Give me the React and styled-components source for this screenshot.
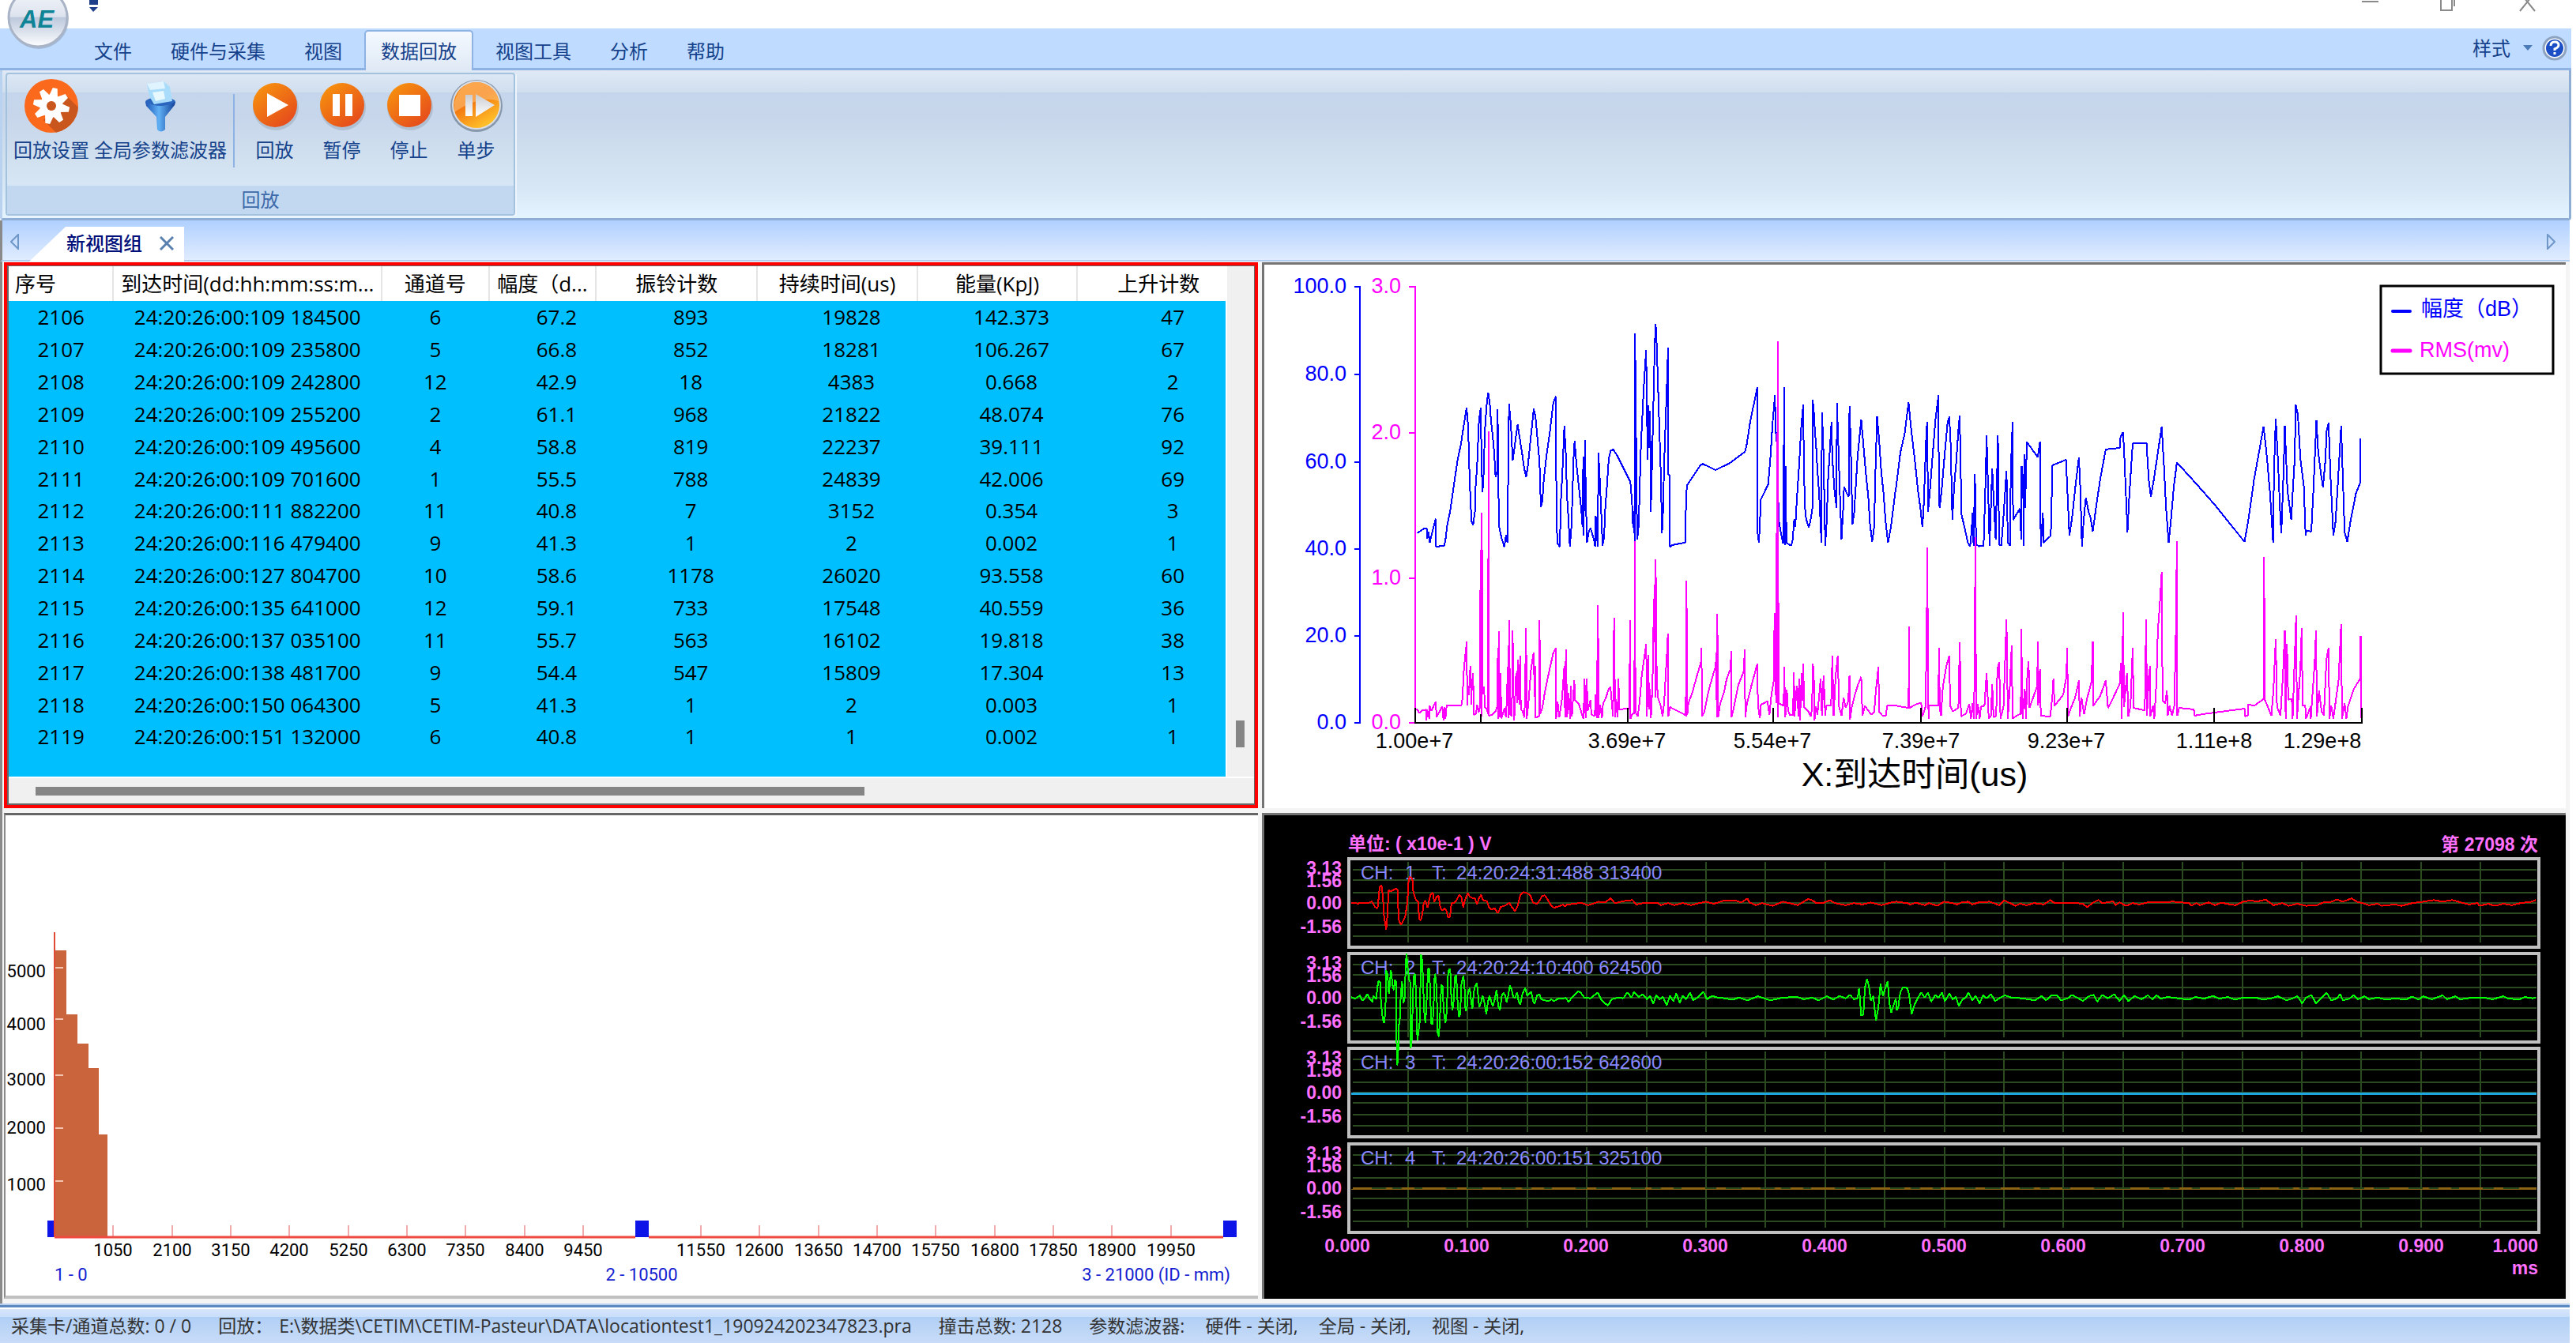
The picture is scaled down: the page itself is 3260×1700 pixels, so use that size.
import React from 'react'
import styled, { createGlobalStyle } from 'styled-components'

const GlobalStyle = createGlobalStyle`
    * {
        box-sizing: border-box;
    }
    body {
        margin: 0;
        background: #ffffff;
        font-family: 'Open Sans', 'Noto Sans CJK SC', sans-serif;
        font-size: 24px;
        line-height: 24px;
    }
    button {
        font: inherit;
        color: inherit;
        border: none;
        background: none;
        padding: 0;
        cursor: pointer;
    }
`

const Window = styled.div`
    position: relative;
    min-height: 100vh;
    display: flex;
    flex-direction: column;
    overflow: hidden;
`

const TitleBar = styled.header`
    height: 36px;
    display: flex;
    justify-content: space-between;
    padding: 0 50px 0 112px;
`

const WindowButtons = styled.div`
    display: flex;
    gap: 78px;
`

const TitleButton = styled.button`
    display: flex;
    height: 16px;
`

const LogoButton = styled.button`
    position: absolute;
    left: 8px;
    top: -18px;
    width: 80px;
    height: 82px;
`

const TabBar = styled.nav`
    height: 53px;
    margin-right: 6px;
    padding: 2px 5px 0 98px;
    display: flex;
    gap: 7px;
    background: #bfdbff;
    border-bottom: 3px solid #8db2e3;
    color: #15428b;
`

const MenuTab = styled.button`
    height: 51px;
    padding: 0 19px;
    white-space: nowrap;
    border: 2px solid ${props => props.$active ? '#8db2e3' : 'transparent'};
    border-width: 2px 2px 0;
    border-radius: 5px 5px 0 0;
    background: ${props => props.$active ? 'linear-gradient(#f4f9ff, #dfe9f5)' : 'none'};
`

const StyleMenu = styled.div`
    margin-left: auto;
    display: flex;
    align-items: center;
    height: 46px;
    gap: 12px;
`

const StyleButton = styled.button`
    display: flex;
    align-items: center;
    gap: 16px;
`

const HelpButton = styled.button`
    display: flex;
`

const Ribbon = styled.section`
    height: 190px;
    margin-right: 6px;
    padding: 3px 4px 4px;
    border: 3px solid #8eaed6;
    border-width: 0 3px 3px 3px;
    border-left-color: #b9d2f0;
    border-radius: 0 0 4px 4px;
    background: linear-gradient(#e0e9f6 0px, #d0deee 28px, #c5d6ec 28px, #c7d6ea 60px, #d0e0ef 110px, #d8e7f5 150px, #e3f4ff 186px);
`

const RibbonGroup = styled.div`
    width: 645px;
    height: 181px;
    display: flex;
    flex-direction: column;
    border: 2px solid #a3c2de;
    border-radius: 4px;
    box-shadow: 2px 1px 0 #eef5fd;
`

const GroupTools = styled.div`
    flex: 1;
    display: flex;
    padding: 6px 0 0 8px;
`

const GroupCaption = styled.div`
    height: 36px;
    line-height: 36px;
    text-align: center;
    color: #3e6aaa;
    background: #c1d8f0;
`

const ToolButton = styled.button`
    min-width: ${props => props.$wide ? '0' : '85px'};
    margin-right: ${props => props.$wide ? '6px' : '0'};
    height: 104px;
    display: flex;
    flex-direction: column;
    align-items: center;
    gap: 10px;
    white-space: nowrap;
    color: #15428b;
`

const ToolSeparator = styled.div`
    width: 2px;
    height: 93px;
    margin: 19px 8px 0 2px;
    background: #8db2e3;
`

const ViewTabs = styled.nav`
    height: 52px;
    margin-right: 8px;
    padding: 8px 18px 0 10px;
    display: flex;
    border-left: 3px solid #8a8a8a;
    border-bottom: 2px solid #b0cdf0;
    background: linear-gradient(#b0d0ff, #e0ecfe);
`

const ArrowButton = styled.button`
    display: flex;
    height: 20px;
    margin-top: 9px;
    margin-left: ${props => props.$end ? 'auto' : '0'};
`

const ViewTab = styled.div`
    height: 44px;
    margin-left: 12px;
    padding: 0 13px 2px 47px;
    display: flex;
    align-items: center;
    gap: 22px;
    background: #ffffff;
    clip-path: polygon(46px 0, 100% 0, 100% 100%, 0 100%);
    font-weight: 500;
    color: #00107a;
`

const Workspace = styled.main`
    flex: 1;
    display: grid;
    grid-template-columns: 1587fr 1650fr;
    align-content: start;
    gap: 6px 5px;
    margin-right: 8px;
    padding: 1px 5px 6px 2px;
    border-left: 3px solid #8a8a8a;
    background: #f4f4f4;
`

const ListPanel = styled.section`
    border: 4px solid #ff0000;
`

const ListFrame = styled.div`
    height: 100%;
    display: grid;
    grid-template-columns: minmax(0, 1fr) 36px;
    border: 1px solid #666666;
    border-width: 1px 1px 2px 2px;
    background: #f0f0f0;
`

const TableArea = styled.div`
    height: 646px;
    overflow: hidden;
    background: #00bfff;
`

const HitTable = styled.table`
    width: calc(100% + 19px);
    height: 616px;
    table-layout: fixed;
    border-collapse: collapse;
    font-size: 26px;
    line-height: 26px;
    color: #000000;
`

const Column = styled.col`
    width: ${props => props.$width}%;
`

const HeadCell = styled.th`
    height: 44px;
    padding: ${props => props.$left ? '0 8px' : '0'};
    text-align: ${props => props.$left ? 'left' : 'center'};
    font-weight: 400;
    white-space: nowrap;
    background: #ffffff;
    border-right: 2px solid #e5e5e5;
`

const Cell = styled.td`
    height: 40px;
    padding: 0 0 0 ${props => props.$shift ? '36px' : '0'};
    text-align: center;
    white-space: nowrap;
`

const VScroll = styled.div`
    display: flex;
    align-items: flex-end;
    padding: 0 0 37px 11px;
    border-left: 2px solid #ffffff;
`

const HScroll = styled.div`
    grid-column: 1 / -1;
    height: 34px;
    padding: 11px 0 0 34px;
    border-top: 2px solid #ffffff;
`

const Thumb = styled.div`
    width: ${props => props.$vertical ? '11px' : '68%'};
    height: ${props => props.$vertical ? '34px' : '11px'};
    background: #858585;
`

const ChartPanel = styled.section`
    border: 3px solid #747474;
    border-width: 3px 0 0 3px;
    background: ${props => props.$dark ? '#000000' : '#ffffff'};
`

const HistogramPanel = styled.section`
    border-top: 3px solid #666666;
    border-left: 2px solid #8a8a8a;
    border-bottom: 4px solid #c0c0c0;
    background: #ffffff;
`

const Chart = styled.svg`
    display: block;
    width: 100%;
    height: auto;
`

const AxisText = styled.text`
    font-family: 'Liberation Sans', 'Noto Sans CJK SC', sans-serif;
    font-size: ${props => props.$size || 27}px;
    font-weight: ${props => props.$bold ? 700 : 400};
    dominant-baseline: central;
`

const NarrowText = styled.text`
    font-family: Roboto, sans-serif;
    font-size: 22px;
    dominant-baseline: central;
`

const StatusBar = styled.footer`
    height: 50px;
    margin-right: 8px;
    display: flex;
    align-items: center;
    gap: 34px;
    padding: 4px 14px 0;
    border-top: 2px solid #b8cfee;
    box-shadow: inset 0 3px 0 #5a88c0, inset 0 5px 0 #ffffff;
    background: linear-gradient(#dce9fb 0px, #c9defa 15px, #b0cff5 15px, #c9dcf8 48px);
    color: #333333;
    font-size: 23px;
    white-space: nowrap;
`

const StatusGroup = styled.div`
    display: flex;
    gap: ${props => props.$gap}px;
`

const tabs = ['文件', '硬件与采集', '视图', '数据回放', '视图工具', '分析', '帮助']

const columns = [
    { title: '序号', width: 8.5 },
    { title: '到达时间(dd:hh:mm:ss:m...', width: 21.8 },
    { title: '通道号', width: 8.7 },
    { title: '幅度（d...', width: 8.7 },
    { title: '振铃计数', width: 13.1 },
    { title: '持续时间(us)', width: 13 },
    { title: '能量(KpJ)', width: 13 },
    { title: '上升计数', width: 13.2 },
]

const hits = [
    ['2106', '24:20:26:00:109 184500', '6', '67.2', '893', '19828', '142.373', '47'],
    ['2107', '24:20:26:00:109 235800', '5', '66.8', '852', '18281', '106.267', '67'],
    ['2108', '24:20:26:00:109 242800', '12', '42.9', '18', '4383', '0.668', '2'],
    ['2109', '24:20:26:00:109 255200', '2', '61.1', '968', '21822', '48.074', '76'],
    ['2110', '24:20:26:00:109 495600', '4', '58.8', '819', '22237', '39.111', '92'],
    ['2111', '24:20:26:00:109 701600', '1', '55.5', '788', '24839', '42.006', '69'],
    ['2112', '24:20:26:00:111 882200', '11', '40.8', '7', '3152', '0.354', '3'],
    ['2113', '24:20:26:00:116 479400', '9', '41.3', '1', '2', '0.002', '1'],
    ['2114', '24:20:26:00:127 804700', '10', '58.6', '1178', '26020', '93.558', '60'],
    ['2115', '24:20:26:00:135 641000', '12', '59.1', '733', '17548', '40.559', '36'],
    ['2116', '24:20:26:00:137 035100', '11', '55.7', '563', '16102', '19.818', '38'],
    ['2117', '24:20:26:00:138 481700', '9', '54.4', '547', '15809', '17.304', '13'],
    ['2118', '24:20:26:00:150 064300', '5', '41.3', '1', '2', '0.003', '1'],
    ['2119', '24:20:26:00:151 132000', '6', '40.8', '1', '1', '0.002', '1'],
]

// every recorded block has its own origin and sample scale
const toPoints = (blocks) => blocks.map(({ x, y, kx, ky, data }) => (
    data.split(' ').map(pair => {
        const [px, py] = pair.split(',').map(Number)
        return `${(x + px / kx).toFixed(1)},${(y + py / ky).toFixed(1)}`
    }).join(' ')
)).join(' ')

const blockA = { x: 1780, y: 400, kx: 3, ky: 3 }
const blockB = { x: 1600, y: 330, kx: 1.889, ky: 2.24 }
const blockC = { x: 2400, y: 330, kx: 1.823, ky: 2.24 }
const waveA = { x: 1700, y: 1080, kx: 3, ky: 3 }
const waveB = { x: 1600, y: 1020, kx: 1.889, ky: 2.306 }
const waveC = { x: 2400, y: 1020, kx: 1.823, ky: 2.306 }

const amplitude = toPoints([
    { ...blockA, data: '40,825 66,808 77,808 79,845 84,820 88,862 97,825 111,770 112,877 124,877 127,872 143,872 148,850 155,790 165,745 180,640 195,540 207,485 215,430 228,348 234,420 238,565 243,705 247,780 253,793 260,740 262,655 268,570 275,395 282,348 284,510 288,670 292,630 294,545 299,405 305,330 310,290 316,330 320,390 327,455 333,520 338,612 344,590 346,355 350,745 352,800 360,840 371,877 378,830 383,860 386,595 389,332 393,375 398,445 403,550 410,500 416,450 422,412 430,465 440,530 446,575 454,612 460,575 466,520 474,440 483,352 490,385 500,500 505,555 510,727 516,700 520,635 530,540 543,450 557,330 567,305 568,585 572,862 582,877 586,705 592,590 599,418 605,530 609,675 614,760 620,875 626,800 630,680 634,545 638,473 645,560 655,655 663,730 668,800 671,535 672,835 678,470 680,660 685,862 692,820 698,805 712,850 716,877 718,758 722,790 724,850 727,877 728,520 732,580 737,695 742,810 744,872 750,840 755,720 760,660 768,540 775,512 785,507 800,530 825,580 840,610 850,630 853,665 858,740 860,805 864,740 866,855 867,66 870,265 873,650 876,848 882,790 884,690 890,490 900,285 906,185 910,130 912,340 916,545 918,340 922,500 925,360 927,745 930,655 934,480 938,300 942,120 946,30 950,112 955,270 960,430 965,590 970,825 974,738 978,565 984,390 990,215 993,120 994,600 999,605 1000,877 1008,870 1058,860 1060,755 1064,645 1090,605 1117,565 1125,562 1150,573 1172,585 1225,560 1285,515 1292,485 1305,400 1332,270 1332,815 1338,862 1342,780 1345,697 1373,640 1382,530 1390,405 1399,300 1401,445 1405,445 1408,600 1414,780 1420,815 1430,865 1434,270 1436,870 1440,570 1442,862 1460,872 1466,850 1472,770 1476,800 1482,695 1490,575 1498,430 1506,337 1508,520 1512,720 1517,770 1527,803 1533,780 1541,730 1542,317 1546,355 1550,430 1556,510 1560,585' },
    { ...blockB, data: '1326,655 1332,800 1333,430 1336,510 1341,808 1345,730 1347,635 1356,457 1358,560 1363,650 1368,700 1369,403 1372,510 1377,700 1380,790 1384,700 1386,642 1392,658 1397,670 1399,413 1402,520 1406,748 1410,718 1413,660 1418,560 1427,450 1432,520 1438,600 1444,670 1448,745 1453,798 1458,755 1461,600 1465,442 1470,510 1475,600 1480,655 1485,735 1491,800 1498,755 1508,660' },
    { ...blockC, data: '0,635 9,545 19,490 28,402 34,480 42,560 50,655 55,700 60,755 63,690 69,490 71,457 73,712 78,640 82,575 90,450 97,382 98,690 100,700 105,640 112,540 118,460 122,442 125,520 129,735 133,640 138,570 143,480 146,440 150,720 155,745 165,800 170,810 173,770 176,715 178,808 181,605 184,805 191,810 201,808 206,610 208,495 211,620 215,808 221,590 224,670 229,790 234,495 237,805 242,808 247,725 254,595 257,800 262,808 264,590 268,457 269,735 285,703 288,790 289,583 292,620 294,808 295,548 297,700 301,514 326,557 331,514 333,810 338,715 339,800 356,780 360,580 388,566 391,563 394,640 399,780 405,730 413,640 421,557 424,640 428,810 432,735 437,672 443,710 448,730 453,767 460,705 470,620 483,535 515,531 517,500 523,486 526,560 533,770 537,670 545,518 577,518 582,620 587,670 594,620 603,545 612,470 617,580 622,700 628,800 633,740 640,640 647,572 690,630 735,693 803,797 812,735 825,620 837,540 847,470 855,560 862,660 869,800 871,600 875,447 880,560 885,710 888,773 893,600 896,468 902,650 911,735 915,640 919,560 921,408 926,436 932,560 940,640 944,780 946,765 957,768 962,650 969,453 973,540 980,610 984,642 990,560 992,485 997,460 1001,600 1008,780 1013,740 1018,640 1026,468 1030,620 1034,770 1040,797 1048,735 1060,660 1070,630 1071,503' },
])

const rms = toPoints([
    { ...blockA, data: '34,1495 42,1495 48,1508 60,1498 75,1495 76,1535 78,1495 87,1530 88,1480 95,1500 103,1480 112,1465 113,1523 124,1505 136,1483 140,1535 145,1484 148,1530 152,1480 208,1480 212,1455 218,1335 225,1272 229,1237 230,1480 233,1405 238,1440 240,1355 244,1330 245,1475 249,1390 253,1357 255,1515 264,1510 268,1475 274,1505 279,1483 281,888 284,1520 286,747 289,1437 294,1408 298,1485 305,1493 310,1510 311,438 313,1518 325,1515 338,1500 344,1485 347,1260 348,1530 351,1197 354,1525 357,1356 360,1528 372,1490 378,1525 385,1332 387,1528 389,1155 394,1512 400,1520 403,1195 406,1430 409,1535 416,1356 420,1470 422,1305 428,1475 431,1290 434,1495 440,1500 448,1525 454,1185 456,1530 463,1470 472,1350 478,1305 483,1278 486,1445 488,1330 489,1525 504,1520 505,1155 508,1510 515,1490 525,1430 535,1380 548,1320 557,1280 567,1260 568,1530 574,1465 580,1525 590,1455 597,1360 599,1330 602,1525 605,1266 610,1525 615,1430 622,1530 623,1405 628,1520 637,1383 640,1460 655,1475 665,1510 672,1530 676,1378 680,1528 684,1378 688,1500 698,1458 702,1513 715,1520 717,1437 722,1528 727,1098 729,1528 735,1475 742,1528 746,1473 757,1450 768,1415 774,1408 778,1450 784,1520 788,1146 792,1523 796,1455 801,1525 805,1377 807,1495 838,1490 846,1490 849,1155 850,1530 858,1510 865,1510 867,855 869,1505 878,1520 885,1465 893,1365 905,1280 910,1245 913,1520 917,1287 922,1495 925,1415 928,1528 934,1400 937,1205 942,1020 945,1450 946,925 950,1390 955,1450 965,1480 972,1520 978,1470 984,1362 990,1260 992,1206 994,1520 1000,1485 1058,1515 1060,1445 1062,1520 1063,1005 1066,1515 1070,1470 1085,1430 1100,1375 1118,1313 1120,1260 1122,1520 1130,1505 1145,1430 1160,1375 1174,1330 1176,1278 1178,1525 1180,1132 1183,1525 1190,1475 1205,1430 1215,1380 1230,1340 1233,1272 1234,1525 1242,1490 1260,1400 1280,1350 1284,1266 1286,1523 1292,1475 1310,1400 1332,1320 1334,1480 1342,1528 1345,1477 1370,1463 1378,1515 1385,1440 1395,1380 1397,1128 1403,1470 1407,445 1409,1523 1410,97 1412,1470 1432,1480 1434,1332 1438,1523 1441,1480 1444,1420 1448,1495 1455,1515 1467,1515 1471,1354 1473,1520 1482,1405 1488,1520 1490,1377 1494,1535 1500,1357 1504,1460 1506,1320 1510,1485 1525,1500 1535,1520 1540,1485 1542,1320 1546,1340 1549,1535 1555,1483 1560,1515' },
    { ...blockB, data: '1330,1185 1333,1290 1337,1175 1341,1290 1343,1262 1355,1262 1358,1120 1361,1290 1366,1175 1371,1120 1374,1265 1380,1290 1385,1240 1390,1268 1396,1250 1399,1175 1400,1302 1405,1262 1412,1230 1420,1200 1427,1180 1430,1290 1436,1262 1443,1275 1452,1287 1458,1280 1462,1220 1468,1152 1470,1280 1478,1290 1486,1290 1489,1262 1508,1262' },
    { ...blockC, data: '0,1262 28,1268 29,1037 30,1268 45,1258 57,1253 60,1292 67,1265 70,1042 71,813 74,1298 75,1262 97,1262 98,1098 100,1270 103,1290 107,1210 115,1150 122,1120 124,1262 130,1278 143,1268 146,1082 149,1292 160,1285 168,1258 172,1298 176,1255 179,1298 181,1042 182,785 184,1298 188,1258 192,1298 195,1265 203,1262 208,1170 213,1298 218,1290 221,1200 224,1295 230,1290 233,1158 237,1138 240,1298 247,1265 254,1016 257,1298 262,1200 266,1090 268,1298 280,1288 287,1285 288,1045 291,1298 296,1215 299,1298 302,1170 305,1136 307,1268 325,1205 326,1080 327,1260 331,1158 333,1290 355,1293 360,1230 362,1185 365,1262 385,1230 392,1180 394,1098 396,1292 402,1270 412,1240 421,1190 423,1292 427,1240 433,1285 440,1240 450,1195 453,1080 454,1262 470,1235 483,1190 488,1268 496,1250 515,1200 518,1140 520,1298 523,996 525,1265 532,1170 535,1292 540,1262 545,1098 547,1268 573,1275 576,1016 578,1290 582,1180 585,1150 586,1292 592,1262 595,1298 600,1190 603,1050 607,985 612,883 614,1248 620,1255 624,1218 626,1290 630,1262 636,1290 641,1262 645,1030 647,796 648,1290 652,1268 686,1272 688,1290 710,1285 803,1270 804,1292 811,1290 811,1258 825,1262 847,1243 848,840 850,1245 865,1290 870,1215 875,1072 878,1265 886,1290 892,1170 896,1048 898,1298 901,1087 904,1245 912,1242 914,1298 920,1080 922,1006 924,1298 932,1158 935,1042 937,1262 943,1260 945,1298 955,1265 956,1298 965,1140 968,1048 970,1292 975,1220 981,1278 986,1290 992,1130 997,1098 999,1298 1003,1262 1008,1298 1020,1190 1026,1030 1028,1298 1034,1255 1038,1298 1042,1262 1055,1215 1070,1185 1071,1064 1072,1298' },
])

const waveOne = toPoints([
    { ...waveA, data: '30,188 45,188 55,192 65,188 75,190 95,190 108,183 120,203 130,210 134,170 138,128 145,122 150,160 155,245 163,290 167,240 172,140 180,145 190,140 200,135 206,140 210,250 218,272 225,262 235,240 243,190 248,100 252,90 262,95 266,150 275,175 284,185 288,250 294,255 300,230 305,190 312,180 320,207 330,160 340,150 345,185 355,165 362,162 368,205 375,218 385,210 392,220 398,245 405,240 411,190 420,188 430,178 440,158 448,165 455,205 463,175 473,150 480,165 490,170 500,172 508,195 515,170 523,158 530,178 545,182 553,205 562,213 575,210 587,228 597,205 610,200 622,195 630,188 640,205 652,220 662,200 672,158 685,148 700,153 710,160 720,188 735,192 745,180 755,162 765,160 775,175 790,200 800,207 815,203 835,195 840,203 850,195 880,192 900,188' },
    { ...waveB, data: '775,290 800,280 815,282 828,270 838,284 860,278 880,275 890,288 910,283 940,283 948,290 965,284 980,290 1000,284 1020,290 1040,284 1055,280 1075,286 1100,276 1125,276 1140,282 1155,271 1160,282 1175,290 1190,284 1215,292 1240,280 1255,284 1275,290 1300,272 1310,276 1320,284 1335,284 1352,276 1365,284 1390,290 1410,284 1430,288 1450,282 1475,290 1500,282' },
    { ...waveC, data: '0,280 25,284 32,288 45,283 65,290 75,284 95,292 103,285 110,280 130,284 140,288 150,282 165,280 175,288 190,282 215,280 237,290 248,276 262,284 275,292 285,286 300,290 318,284 340,288 355,275 365,284 415,284 430,286 440,296 452,284 466,275 475,284 500,279 505,290 515,282 530,292 545,284 560,288 580,282 640,280 675,284 680,292 692,284 700,290 720,282 735,290 750,283 770,288 782,290 800,280 818,276 830,280 852,274 870,290 890,284 905,292 925,286 945,292 970,290 985,282 1005,280 1015,273 1030,280 1050,270 1062,280 1075,284 1090,290 1110,286 1120,292 1150,288 1165,292 1190,284 1215,280 1240,275 1260,280 1282,275 1300,281 1320,288 1340,284 1345,292 1365,286 1380,292 1400,286 1420,290 1440,284 1465,280 1475,275' },
])

const waveTwo = toPoints([
    { ...waveA, data: '30,547 45,553 63,540 72,560 82,550 91,535 100,552 110,565 115,542 125,555 129,510 134,485 140,490 143,570 150,630 155,645 160,600 163,445 168,460 173,535 178,480 181,443 187,500 192,520 196,480 201,490 203,805 208,790 210,660 215,625 218,540 223,485 228,570 233,550 237,420 240,382 244,430 250,480 254,490 256,740 261,700 263,580 267,470 273,458 278,600 281,710 285,680 290,640 295,385 300,410 304,520 308,620 312,645 318,530 322,437 327,440 330,540 334,645 339,650 343,580 347,458 352,480 356,580 358,680 363,697 367,620 372,500 377,505 381,600 388,645 393,600 397,470 401,440 406,440 410,550 414,598 419,560 424,470 429,462 434,570 439,622 444,610 448,500 456,466 460,500 464,600 469,590 473,530 480,512 485,560 490,592 495,530 500,505 507,493 511,530 516,585 522,570 529,540 536,570 543,612 548,570 555,540 562,565 568,580 574,560 582,518 588,580 595,597 602,540 608,530 614,540 620,565 626,540 632,503 638,515 645,545 652,550 660,528 665,560 672,575 680,535 690,512 698,540 705,535 713,525 720,560 726,573 735,540 745,537 752,555 770,560 780,562 790,555 800,562 815,553 845,550 855,565 865,552 880,535 892,525 900,528' },
    { ...waveB, data: '765,560 780,562 797,545 805,565 812,575 822,583 830,565 845,560 858,562 868,545 878,560 884,543 895,558 905,550 915,565 922,555 930,578 937,553 945,565 953,558 962,582 970,555 978,570 985,548 993,575 1000,555 1008,565 1018,545 1025,568 1035,560 1050,543 1058,565 1070,555 1085,560 1100,562 1120,566 1135,560 1155,568 1180,556 1210,568 1240,560 1275,558 1290,565 1310,560 1325,568 1345,556 1360,566 1375,555 1390,562 1400,552 1410,565 1418,562 1422,532 1427,612 1432,610 1436,530 1441,505 1445,525 1450,568 1456,555 1462,628 1468,590 1473,520 1479,555 1485,530 1490,513 1495,580 1499,603 1505,580 1510,563' },
    { ...waveC, data: '0,597 4,590 9,545 15,530 25,532 29,550 35,608 42,580 50,560 57,545 65,560 73,545 80,572 90,552 97,560 105,545 112,570 122,548 130,565 137,558 144,585 152,565 160,560 166,545 175,568 183,555 192,577 200,552 208,562 218,550 228,570 240,560 250,553 265,560 290,562 320,568 335,555 345,568 358,553 370,553 380,568 395,562 405,552 420,562 430,570 445,555 455,552 463,572 475,552 488,562 502,550 515,570 525,552 535,570 550,555 565,565 580,553 590,565 600,553 610,563 625,558 650,562 675,566 690,558 710,563 730,555 745,563 765,558 780,566 800,560 830,560 845,566 865,562 880,556 900,568 915,562 925,555 936,577 945,560 957,552 968,577 980,562 992,545 1003,568 1015,563 1024,550 1030,568 1045,563 1055,552 1065,565 1080,556 1090,565 1110,560 1130,566 1150,562 1175,566 1190,557 1205,566 1215,556 1235,565 1260,553 1270,565 1290,556 1300,565 1330,560 1355,560 1375,565 1400,556 1410,562 1435,566 1450,558 1468,562 1475,560' },
])

const AppLogo = () => (
    <svg width="80" height="82" viewBox="0 0 80 82">
        <defs>
            <linearGradient id="orb" x1="0" y1="0" x2="0" y2="1">
                <stop offset="0" stopColor="#f4f6fa" />
                <stop offset="0.49" stopColor="#dde3ee" />
                <stop offset="0.5" stopColor="#bcc8dc" />
                <stop offset="1" stopColor="#fdfdfe" />
            </linearGradient>
        </defs>
        <circle cx="41" cy="42" r="38" fill="#8fa3c0" opacity="0.6" />
        <circle cx="40" cy="40" r="37" fill="url(#orb)" stroke="#a9b4c7" strokeWidth="3" />
        <text x="17" y="53" fontFamily="Liberation Sans, sans-serif" fontSize="31" fontWeight="700" fontStyle="italic" fill="#0f8496">AE</text>
        <path d="M50 37 H62 M48 46 H60" stroke="#d5dde9" strokeWidth="1" />
    </svg>
)

const SettingsIcon = () => (
    <svg width="68" height="68" viewBox="0 0 68 68">
        <defs>
            <clipPath id="disc"><circle cx="34" cy="34" r="34" /></clipPath>
        </defs>
        <circle cx="34" cy="34" r="34" fill="#fb6a1c" />
        <path d="M52 20 L80 48 L60 80 L44 72 L24 52 Z" fill="#c9561c" clipPath="url(#disc)" />
        {[0, 45, 90, 135, 180, 225, 270, 315].map(angle => (
            <path key={angle} d="M28 24 L31 11 L37 11 L40 24 Z" fill="#ffffff" transform={`rotate(${angle + 12} 34 34)`} />
        ))}
        <circle cx="34" cy="34" r="10" fill="none" stroke="#ffffff" strokeWidth="9" />
        <circle cx="34" cy="34" r="6" fill="#c9561c" />
    </svg>
)

const FilterIcon = () => (
    <svg width="68" height="68" viewBox="0 0 68 68">
        <defs>
            <linearGradient id="funnel" x1="0" y1="0" x2="1" y2="0">
                <stop offset="0" stopColor="#1c55b4" />
                <stop offset="0.45" stopColor="#5fb0f5" />
                <stop offset="1" stopColor="#123f97" />
            </linearGradient>
        </defs>
        <ellipse cx="34" cy="29" rx="19" ry="6" fill="#2a66bd" />
        <path d="M15 29 Q34 39 53 29 L52 33 L40 48 L40 64 Q34 69 30 64 L29 48 L16 34 Z" fill="url(#funnel)" />
        <path d="M17 6 L38 3 L46 10 L49 28 L26 32 L20 22 Z" fill="#a9dcfb" />
        <path d="M17 6 L38 3 L40 12 L21 14 Z" fill="#dff4ff" />
        <path d="M24 17 L38 15 L40 25 L28 28 Z" fill="#e8f8ff" />
    </svg>
)

const MediaIcon = ({ kind }) => (
    <svg width="68" height="68" viewBox="0 0 68 68">
        <defs>
            <linearGradient id={`media-${kind}`} x1="0" y1="0" x2="0.8" y2="1">
                <stop offset="0" stopColor="#f99a0c" />
                <stop offset="1" stopColor="#e5481d" />
            </linearGradient>
        </defs>
        <circle cx="35" cy="36" r="29" fill="#8d9db0" opacity="0.4" />
        <circle cx="34" cy="33" r="28" fill={`url(#media-${kind})`} />
        {kind === 'play' && <path d="M24 18 V48 L51 33 Z" fill="#ffffff" />}
        {kind === 'pause' && <path d="M22 19 H31 V47 H22 Z M38 19 H47 V47 H38 Z" fill="#ffffff" />}
        {kind === 'stop' && <path d="M21 20 H48 V47 H21 Z" fill="#ffffff" />}
    </svg>
)

const StepIcon = () => (
    <svg width="68" height="68" viewBox="0 0 68 68">
        <defs>
            <linearGradient id="step" x1="0" y1="0" x2="0.6" y2="1">
                <stop offset="0" stopColor="#f98b12" />
                <stop offset="0.5" stopColor="#f47a10" />
                <stop offset="1" stopColor="#ffc02a" />
            </linearGradient>
            <linearGradient id="stepBar" x1="0" y1="0" x2="0" y2="1">
                <stop offset="0" stopColor="#c9cbd0" />
                <stop offset="1" stopColor="#ffffff" />
            </linearGradient>
        </defs>
        <circle cx="34" cy="34" r="33" fill="#8797ac" />
        <circle cx="34" cy="33" r="31" fill="#d9dde4" />
        <circle cx="34" cy="33" r="29" fill="url(#step)" />
        <path d="M6 30 Q12 5 34 4 Q58 6 62 28 Q40 20 6 42 Z" fill="#ffc98a" opacity="0.5" />
        <path d="M20 20 H29 V47 H20 Z M33 19 L57 33 L33 48 Z" fill="url(#stepBar)" />
    </svg>
)

const HelpIcon = () => (
    <svg width="32" height="32" viewBox="0 0 32 32">
        <circle cx="16" cy="16" r="14" fill="#ffffff" stroke="#8ea3bf" strokeWidth="3" />
        <circle cx="16" cy="16" r="11" fill="#1c4fc6" />
        <path d="M11 13 Q11 8 16 8 Q21 8 21 12 Q21 15 16 17 V19 M16 21 V24" fill="none" stroke="#ffffff" strokeWidth="3" />
    </svg>
)

const tools = [
    { label: '回放', icon: <MediaIcon kind="play" /> },
    { label: '暂停', icon: <MediaIcon kind="pause" /> },
    { label: '停止', icon: <MediaIcon kind="stop" /> },
    { label: '单步', icon: <StepIcon /> },
]

const HitList = () => (
    <ListPanel>
        <ListFrame>
            <TableArea>
                <HitTable>
                    <colgroup>
                        {columns.map(column => <Column key={column.title} $width={column.width} />)}
                    </colgroup>
                    <thead>
                        <tr>
                            {columns.map((column, i) => (
                                <HeadCell key={column.title} $left={i === 0}>{column.title}</HeadCell>
                            ))}
                        </tr>
                    </thead>
                    <tbody>
                        {hits.map(hit => (
                            <tr key={hit[0]}>
                                {hit.map((value, i) => <Cell key={i} $shift={i > 2}>{value}</Cell>)}
                            </tr>
                        ))}
                    </tbody>
                </HitTable>
            </TableArea>
            <VScroll>
                <Thumb $vertical />
            </VScroll>
            <HScroll>
                <Thumb />
            </HScroll>
        </ListFrame>
    </ListPanel>
)

const dbTicks = [['100.0', 363], ['80.0', 474], ['60.0', 585], ['40.0', 695], ['20.0', 805], ['0.0', 915]]
const mvTicks = [['3.0', 363], ['2.0', 548], ['1.0', 732], ['0.0', 915]]
const timeLabels = [['1.00e+7', 1790], ['3.69e+7', 2059], ['5.54e+7', 2243], ['7.39e+7', 2431], ['9.23e+7', 2615], ['1.11e+8', 2802], ['1.29e+8', 2939]]

const TimeChart = () => (
    <ChartPanel>
        <Chart viewBox="1600 335 1647 687">
            <g stroke="#0000ff" strokeWidth="2" shapeRendering="crispEdges">
                <path d="M1721 362 V916" />
                {dbTicks.map(([label, y]) => <path key={label} d={`M1714 ${y} H1721`} />)}
            </g>
            {dbTicks.map(([label, y]) => (
                <AxisText key={label} x="1704" y={y - 1} textAnchor="end" fill="#0000ff">{label}</AxisText>
            ))}
            {mvTicks.map(([label, y]) => (
                <AxisText key={label} x="1773" y={y - 1} textAnchor="end" fill="#ff00ff">{label}</AxisText>
            ))}
            <polyline points={amplitude} fill="none" stroke="#0000ff" strokeWidth="2" strokeLinejoin="bevel" shapeRendering="crispEdges" />
            <polyline points={rms} fill="none" stroke="#ff00ff" strokeWidth="2" strokeLinejoin="bevel" shapeRendering="crispEdges" />
            <g stroke="#ff00ff" strokeWidth="2" shapeRendering="crispEdges">
                <path d="M1791 362 V916" />
                {mvTicks.map(([label, y]) => <path key={label} d={`M1783 ${y} H1791`} />)}
            </g>
            <path d="M1790 915 H2990 M1791 896 V915 M1874 904 V915 M2060 896 V915 M2244 896 V915 M2431 896 V915 M2616 896 V915 M2802 896 V915 M2989 896 V915" stroke="#000000" strokeWidth="2" shapeRendering="crispEdges" />
            {timeLabels.map(([label, x]) => (
                <AxisText key={label} x={x} y="938" textAnchor="middle">{label}</AxisText>
            ))}
            <AxisText x="2423" y="980" textAnchor="middle" $size={43}>X:到达时间(us)</AxisText>
            <rect x="3013" y="362" width="218" height="111" fill="#ffffff" stroke="#000000" strokeWidth="3" />
            <path d="M3028 394 H3050" stroke="#0000ff" strokeWidth="4" strokeLinecap="round" />
            <AxisText x="3064" y="391" fill="#0000ff">幅度（dB）</AxisText>
            <path d="M3028 444 H3050" stroke="#ff00ff" strokeWidth="5" strokeLinecap="round" />
            <AxisText x="3062" y="443" fill="#ff00ff">RMS(mv)</AxisText>
        </Chart>
    </ChartPanel>
)

const bars = [[69, 1203], [83, 1284], [97, 1321], [110, 1352], [124, 1436]]
const countTicks = [['5000', 1225, 1229], ['4000', 1290, 1296], ['3000', 1361, 1366], ['2000', 1428, 1427], ['1000', 1495, 1499]]
const distances = [1050, 2100, 3150, 4200, 5250, 6300, 7350, 8400, 9450, 11550, 12600, 13650, 14700, 15750, 16800, 17850, 18900, 19950]
const distanceX = (mm) => Math.round(69 + mm * 1487 / 21000)

const Histogram = () => (
    <HistogramPanel>
        <Chart viewBox="7 1032 1585 608">
            <rect x="60" y="1545" width="17" height="21" fill="#0c14e8" />
            <rect x="804" y="1545" width="17" height="21" fill="#0c14e8" />
            <rect x="1548" y="1545" width="17" height="21" fill="#0c14e8" />
            {bars.map(([x, y]) => <rect key={x} x={x} y={y} width={x === 124 ? 12 : 15} height={1565 - y} fill="#ca643c" />)}
            <path d="M69 1180 V1566" stroke="#e04a34" strokeWidth="2" />
            <path d="M69 1566 H804 M821 1566 H1548" stroke="#ee4a40" strokeWidth="3" />
            {countTicks.map(([label, tick, y]) => (
                <g key={label}>
                    <path d={`M70 ${tick} H80`} stroke="#f5c4ae" strokeWidth="2" />
                    <NarrowText x="58" y={y} textAnchor="end">{label}</NarrowText>
                </g>
            ))}
            {distances.map(mm => (
                <g key={mm}>
                    <path d={`M${distanceX(mm)} 1551 V1565`} stroke="#e2565a" />
                    <NarrowText x={distanceX(mm)} y="1582" textAnchor="middle">{mm}</NarrowText>
                </g>
            ))}
            <NarrowText x="69" y="1613" fill="#1420d0">1 - 0</NarrowText>
            <NarrowText x="812" y="1613" textAnchor="middle" fill="#1420d0">2 - 10500</NarrowText>
            <NarrowText x="1557" y="1613" textAnchor="end" fill="#1420d0">3 - 21000 (ID - mm)</NarrowText>
        </Chart>
    </HistogramPanel>
)

const channels = [
    { id: 1, time: '24:20:24:31:488 313400', top: 1085 },
    { id: 2, time: '24:20:24:10:400 624500', top: 1205 },
    { id: 3, time: '24:20:26:00:152 642600', top: 1325 },
    { id: 4, time: '24:20:26:00:151 325100', top: 1446 },
]
const gridX = Array.from({ length: 19 }, (_, i) => Math.round(1782 + i * 754 / 10))
const gridY = [16, 29, 45, 58, 71, 86, 100]
const voltLabels = [['3.13', 14], ['1.56', 30], ['0.00', 58], ['-1.56', 88]]
const msLabels = ['0.000', '0.100', '0.200', '0.300', '0.400', '0.500', '0.600', '0.700', '0.800', '0.900']

const WaveChart = () => (
    <ChartPanel $dark>
        <Chart viewBox="1600 1032 1647 612">
            <AxisText x="1706" y="1068" fill="#ff70ff" $size={23} $bold>单位: ( x10e-1 ) V</AxisText>
            <AxisText x="3212" y="1069" textAnchor="end" fill="#ff70ff" $size={23} $bold>第 27098 次</AxisText>
            {channels.map(({ id, time, top }) => (
                <g key={id}>
                    <g stroke="#2b4a20" strokeWidth="2" shapeRendering="crispEdges">
                        {gridX.map(x => <path key={x} d={`M${x} ${top + 6} V${top + 108}`} />)}
                        {gridY.map(y => <path key={y} d={`M1712 ${top + y} H3210`} />)}
                    </g>
                    <rect x="1707" y={top + 2} width="1506" height="112" fill="none" stroke="#c0c0c0" strokeWidth="4" />
                    {voltLabels.map(([label, y]) => (
                        <AxisText key={label} x="1698" y={top + y} textAnchor="end" fill="#ff70ff" $size={23} $bold>{label}</AxisText>
                    ))}
                    <AxisText x="1722" y={top + 19} fill="#8888ff" $size={24}>CH:</AxisText>
                    <AxisText x="1778" y={top + 19} fill="#8888ff" $size={24}>{id}</AxisText>
                    <AxisText x="1812" y={top + 19} fill="#8888ff" $size={24}>T:</AxisText>
                    <AxisText x="1843" y={top + 19} fill="#8888ff" $size={24}>{time}</AxisText>
                </g>
            ))}
            <g fill="none" strokeWidth="2" strokeLinejoin="bevel" shapeRendering="crispEdges">
                <polyline points={waveOne} stroke="#ff0000" />
                <polyline points={waveTwo} stroke="#00ff00" />
                <path d="M1710 1384 H3210" stroke="#1ea6e0" strokeWidth="3" />
                <path d="M1710 1505 H3210" stroke="#8c6414" strokeWidth="1" />
                <path d="M1712 1504 H3210" stroke="#8c6414" strokeDasharray="24 18 8 12 16 10 30 14 12 20" />
            </g>
            {msLabels.map((label, i) => (
                <AxisText key={label} x={1705 + i * 151} y="1577" textAnchor="middle" fill="#ff70ff" $size={23} $bold>{label}</AxisText>
            ))}
            <AxisText x="3212" y="1577" textAnchor="end" fill="#ff70ff" $size={23} $bold>1.000</AxisText>
            <AxisText x="3212" y="1605" textAnchor="end" fill="#ff70ff" $size={23} $bold>ms</AxisText>
        </Chart>
    </ChartPanel>
)

const App = () => {
    return (
        <Window>
            <GlobalStyle />
            <TitleBar>
                <TitleButton aria-label="quick access">
                    <svg width="14" height="16" viewBox="0 0 14 16">
                        <path d="M1 0 H12 V6 H1 Z M1 9 H12 L6 15 Z" fill="#1f3f8a" />
                    </svg>
                </TitleButton>
                <WindowButtons>
                    <TitleButton aria-label="minimize">
                        <svg width="22" height="16" viewBox="0 0 22 16"><path d="M1 2 H22" stroke="#8a8a8a" strokeWidth="2" /></svg>
                    </TitleButton>
                    <TitleButton aria-label="restore">
                        <svg width="22" height="16" viewBox="0 0 22 16">
                            <path d="M1 0 V13 H15 V0 M18 0 V8" fill="none" stroke="#8a8a8a" strokeWidth="2" />
                        </svg>
                    </TitleButton>
                    <TitleButton aria-label="close">
                        <svg width="22" height="16" viewBox="0 0 22 16">
                            <path d="M1 14 L14 -2 M20 14 L7 -2" fill="none" stroke="#8a8a8a" strokeWidth="2" />
                        </svg>
                    </TitleButton>
                </WindowButtons>
            </TitleBar>
            <TabBar>
                {tabs.map(tab => <MenuTab key={tab} $active={tab === '数据回放'}>{tab}</MenuTab>)}
                <StyleMenu>
                    <StyleButton>
                        样式
                        <svg width="12" height="8" viewBox="0 0 12 8"><path d="M0 0 H12 L6 7 Z" fill="#4a7ab8" /></svg>
                    </StyleButton>
                    <HelpButton aria-label="help">
                        <HelpIcon />
                    </HelpButton>
                </StyleMenu>
            </TabBar>
            <LogoButton aria-label="application menu"><AppLogo /></LogoButton>
            <Ribbon>
                <RibbonGroup>
                    <GroupTools>
                        <ToolButton $wide><SettingsIcon />回放设置</ToolButton>
                        <ToolButton $wide><FilterIcon />全局参数滤波器</ToolButton>
                        <ToolSeparator />
                        {tools.map(tool => <ToolButton key={tool.label}>{tool.icon}{tool.label}</ToolButton>)}
                    </GroupTools>
                    <GroupCaption>回放</GroupCaption>
                </RibbonGroup>
            </Ribbon>
            <ViewTabs>
                <ArrowButton aria-label="previous view">
                    <svg width="12" height="20" viewBox="0 0 12 20"><path d="M10 1 V19 L1 10 Z" fill="none" stroke="#6f97c8" strokeWidth="2" /></svg>
                </ArrowButton>
                <ViewTab>
                    新视图组
                    <button aria-label="close view">
                        <svg width="18" height="18" viewBox="0 0 18 18"><path d="M1 1 L17 17 M17 1 L1 17" stroke="#5a80b0" strokeWidth="3" /></svg>
                    </button>
                </ViewTab>
                <ArrowButton $end aria-label="next view">
                    <svg width="13" height="20" viewBox="0 0 13 20"><path d="M3 1 V19 L12 10 Z" fill="none" stroke="#6f97c8" strokeWidth="2" /></svg>
                </ArrowButton>
            </ViewTabs>
            <Workspace>
                <HitList />
                <TimeChart />
                <Histogram />
                <WaveChart />
            </Workspace>
            <StatusBar>
                <span>采集卡/通道总数: 0 / 0</span>
                <StatusGroup $gap={8}>
                    <span>回放：</span>
                    <span>E:\数据类\CETIM\CETIM-Pasteur\DATA\locationtest1_190924202347823.pra</span>
                </StatusGroup>
                <span>撞击总数: 2128</span>
                <StatusGroup $gap={26}>
                    <span>参数滤波器:</span>
                    <span>硬件 - 关闭,</span>
                    <span>全局 - 关闭,</span>
                    <span>视图 - 关闭,</span>
                </StatusGroup>
            </StatusBar>
        </Window>
    )
}

export default App
